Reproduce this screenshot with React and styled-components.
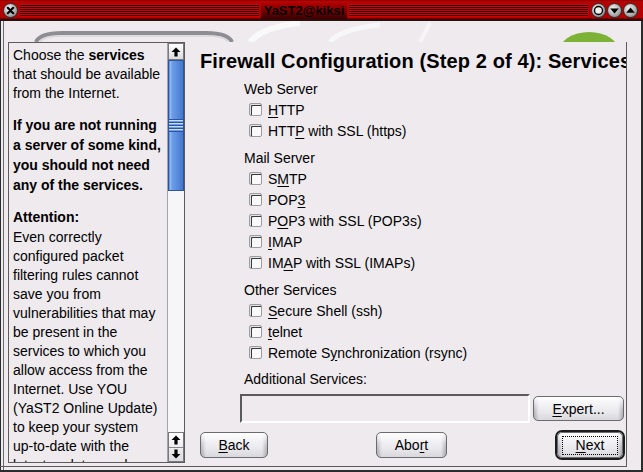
import React from 'react';
import styled, { createGlobalStyle } from 'styled-components';

const BG = '#eeeaee';

const Global = createGlobalStyle`
  html, body { margin: 0; padding: 0; background: ${BG}; }
  body { font-family: "Liberation Sans", Arial, sans-serif; color: #000; }
`;

const Window = styled.div`
  width: 643px;
  height: 472px;
  display: flex;
  flex-direction: column;
  overflow: hidden;
  background: ${BG};
`;

/* ---------- title bar ---------- */
const TitleBar = styled.div`
  flex: none;
  height: 21px;
  box-sizing: border-box;
  display: flex;
  align-items: center;
  gap: 2px;
  padding: 0 5px 0 3px;
  background: linear-gradient(to bottom, #6a0000 0, #b80000 1px, #b00000 18px, #400000 19px, #1a1a1a 21px);
`;

const Stripes = styled.div`
  flex: 1;
  height: 13px;
  background: repeating-linear-gradient(to bottom, #d40000 0 1px, #2a0000 1px 2px);
`;

const TitleLabel = styled.div`
  height: 16px;
  display: flex;
  align-items: center;
  padding: 0 3px;
  background: linear-gradient(to bottom, #b00000, #3a0000);
  font: bold 13px "Liberation Sans", Arial, sans-serif;
  color: #050000;
  white-space: nowrap;
`;

const WinButtons = styled.div`
  display: flex;
  gap: 1px;
  margin-left: 1px;
`;

const CircleBtn = ({ kind }) => (
  <svg width="15" height="15" viewBox="0 0 15 15">
    <defs>
      <radialGradient id={`g-${kind}`} cx="0.4" cy="0.35" r="0.7">
        <stop offset="0" stopColor="#f4f4f4" />
        <stop offset="1" stopColor="#8a8a8a" />
      </radialGradient>
    </defs>
    <circle cx="7.5" cy="7.5" r="7" fill={`url(#g-${kind})`} stroke="#2a2a2a" strokeWidth="1" />
    {kind === 'close' && (
      <path d="M4.8 4.8 L10.2 10.2 M10.2 4.8 L4.8 10.2" stroke="#000" strokeWidth="2.2" strokeLinecap="round" />
    )}
    {kind === 'ring' && <circle cx="7.5" cy="7.5" r="4" fill="#eee" stroke="#000" strokeWidth="1.4" />}
    {kind === 'down' && <path d="M3.2 5.5 L11.8 5.5 L7.5 10.5 Z" fill="#000" />}
    {kind === 'up' && <path d="M3.2 9.8 L11.8 9.8 L7.5 4.6 Z" fill="#000" />}
  </svg>
);

/* ---------- frame ---------- */
const Frame = styled.div`
  flex: 1;
  min-height: 0;
  overflow: hidden;
  display: flex;
  flex-direction: column;
  border-right: 2px solid #2c2c2c;
  box-shadow: inset 1px 0 0 #2c2c2c, inset 3px 0 0 ${BG}, inset 4px 0 0 #6a6a6a;
`;

const Banner = styled.div`
  flex: none;
  height: 21px;
  overflow: hidden;
  svg { display: block; }
`;

const Body = styled.div`
  flex: 1;
  min-height: 0;
  display: flex;
`;

const Main = styled.div`
  width: 627px;
  box-sizing: border-box;
  display: flex;
  min-height: 0;
  padding: 0 0 3px 8px;
  border-right: 1px solid #5a5a5a;
  border-bottom: 1px solid #5a5a5a;
`;

const BottomEdge = styled.div`
  flex: none;
  height: 5px;
  box-sizing: border-box;
  border-bottom: 2px solid #2c2c2c;
`;

/* ---------- help panel ---------- */
const HelpPanel = styled.div`
  width: 177px;
  flex: none;
  min-height: 0;
  box-sizing: border-box;
  border: 1px solid #5c5c5c;
  display: flex;
`;

const HelpText = styled.div`
  flex: 1;
  min-width: 0;
  min-height: 0;
  overflow: hidden;
  padding: 3px 0 0 4px;
  font-size: 14px;
  line-height: 19px;
  white-space: nowrap;
`;

const Para = styled.p`
  margin: 0 0 12px;
  font-weight: ${(p) => (p.$bold ? 'bold' : 'normal')};
  line-height: ${(p) => (p.$bold ? '20px' : '19px')};
`;

const Heading = styled.div`
  font-weight: bold;
  line-height: 21px;
`;

const Scrollbar = styled.div`
  width: 17px;
  flex: none;
  display: flex;
  flex-direction: column;
  border-left: 1px solid #a4a4a8;
  box-sizing: border-box;
`;

const ScrollBtn = styled.div`
  height: ${(p) => p.$h}px;
  flex: none;
  box-sizing: border-box;
  border: 1px solid #7a7a7e;
  background: linear-gradient(to bottom, #ffffff, #dcdce0);
  display: flex;
  flex-direction: column;
  align-items: center;
  justify-content: center;
`;

const Half = styled.div`
  flex: 1;
  width: 100%;
  display: flex;
  align-items: center;
  justify-content: center;
  border-top: ${(p) => (p.$sep ? '1px solid #8a8a8e' : 'none')};
`;

const Track = styled.div`
  flex: 1;
  min-height: 0;
  background: #f6f5f7;
  display: flex;
  flex-direction: column;
`;

const Thumb = styled.div`
  height: 131px;
  flex: none;
  box-sizing: border-box;
  border: 1px solid #2c55a0;
  background: linear-gradient(to right, #3c6cc0 0, #9cc2f4 1px, #6c9ee8 3px, #5a8cdc 60%, #4576c8 100%);
  display: flex;
  align-items: center;
`;

const Grip = styled.div`
  width: 100%;
  height: 13px;
  background: repeating-linear-gradient(to bottom, #2c55a0 0 1px, #c4dcfa 1px 2px, #6c9ee8 2px 3px);
`;

const Arrow = ({ down }) => (
  <svg width="10" height="10" viewBox="0 0 10 10" style={down ? { transform: 'rotate(180deg)' } : undefined}>
    <path d="M5 0.5 L9.5 5 L6.6 5 L6.6 9.5 L3.4 9.5 L3.4 5 L0.5 5 Z" fill="#000" />
  </svg>
);

/* ---------- right pane ---------- */
const RightPane = styled.div`
  flex: 1;
  min-width: 0;
  display: flex;
  flex-direction: column;
  padding: 7px 1px 3px 15px;
  overflow: hidden;
`;

const Title = styled.h1`
  margin: 0;
  font: bold 20px/24px "Liberation Sans", Arial, sans-serif;
  letter-spacing: 0.12px;
  white-space: nowrap;
`;

const Services = styled.div`
  margin: 6px 0 0 40px;
  display: flex;
  flex-direction: column;
  gap: 7px;
  font-size: 14px;
`;

const Group = styled.div`
  display: flex;
  flex-direction: column;
`;

const GroupLabel = styled.div`
  padding-left: 4px;
  line-height: 20px;
  white-space: nowrap;
`;

const Row = styled.label`
  height: 21px;
  display: flex;
  align-items: center;
  gap: 6px;
  padding-left: 9px;
  white-space: nowrap;
`;

const Check = styled.span`
  width: 13px;
  height: 13px;
  flex: none;
  box-sizing: border-box;
  border: 1px solid #9c9ca0;
  border-radius: 2px;
  background: #faf9fa;
  box-shadow: inset 1px 1px 0 #e4e4e6, inset 2px 2px 0 #3a3a3a;
`;

const Key = styled.span`
  text-decoration: underline;
  text-underline-offset: 2px;
`;

const AddLabel = styled(GroupLabel)`
  margin-top: -1px;
`;

const AddRow = styled.div`
  display: flex;
  align-items: center;
  gap: 3px;
  margin-top: 5px;
`;

const Input = styled.div`
  width: 290px;
  height: 29px;
  box-sizing: border-box;
  border: 2px solid;
  border-color: #5a5a5a #ffffff #ffffff #5a5a5a;
  background: ${BG};
`;

const Button = styled.div`
  width: ${(p) => p.$w}px;
  height: ${(p) => p.$h || 26}px;
  box-sizing: border-box;
  display: flex;
  align-items: center;
  justify-content: center;
  font-size: 14px;
  border: 1px solid #6c6c70;
  border-radius: 5px;
  background:
    linear-gradient(to bottom, rgba(255,255,255,0.95) 0, rgba(255,255,255,0.2) 45%, rgba(0,0,0,0) 60%, rgba(0,0,0,0.08) 100%),
    linear-gradient(to right, #b8b8be 0, #ebebef 5px, #ebebef calc(100% - 5px), #b4b4ba 100%);
  white-space: nowrap;
`;

const FocusRing = styled.div`
  border: 2px solid #1c1c1c;
  border-radius: 7px;
  display: flex;
`;

const FocusText = styled.span`
  width: 56px;
  height: 19px;
  box-sizing: border-box;
  display: flex;
  align-items: center;
  justify-content: center;
  border: 1px dotted #000;
`;

const ButtonRow = styled.div`
  margin-top: auto;
  height: 30px;
  flex: none;
  display: flex;
  align-items: center;
  justify-content: space-between;
`;

const Option = ({ children }) => (
  <Row>
    <Check />
    <span>{children}</span>
  </Row>
);

const BannerArt = () => (
  <svg width="641" height="21" viewBox="0 0 641 21">
    <path d="M250 21 Q262 6 300 2" stroke="#ffffff" strokeWidth="6" fill="none" opacity="0.7" />
    <path d="M330 21 Q340 8 380 4" stroke="#ffffff" strokeWidth="5" fill="none" opacity="0.6" />
    <path d="M420 21 L430 2" stroke="#ffffff" strokeWidth="4" fill="none" opacity="0.5" />
    <path d="M36 21 Q40 12 62 12 L206 12 Q228 12 232 21" stroke="#8e8e92" strokeWidth="4" fill="none" />
    <path d="M40 21 Q44 15 62 15 L206 15 Q225 15 228 21" stroke="#d8d6da" strokeWidth="1.5" fill="none" />
    <ellipse cx="589" cy="31" rx="30" ry="20" fill="#7cb236" />
  </svg>
);

export default function App() {
  return (
    <>
      <Global />
      <Window>
        <TitleBar>
          <CircleBtn kind="close" />
          <Stripes />
          <TitleLabel>YaST2@kiksi</TitleLabel>
          <Stripes />
          <WinButtons>
            <CircleBtn kind="ring" />
            <CircleBtn kind="down" />
            <CircleBtn kind="up" />
          </WinButtons>
        </TitleBar>
        <Frame>
          <Banner>
            <BannerArt />
          </Banner>
          <Body>
            <Main>
              <HelpPanel>
                <HelpText>
                  <Para>
                    Choose the <b>services</b>
                    <br />that should be available
                    <br />from the Internet.
                  </Para>
                  <Para $bold>
                    If you are not running
                    <br />a server of some kind,
                    <br />you should not need
                    <br />any of the services.
                  </Para>
                  <Heading>Attention:</Heading>
                  <Para>
                    Even correctly
                    <br />configured packet
                    <br />filtering rules cannot
                    <br />save you from
                    <br />vulnerabilities that may
                    <br />be present in the
                    <br />services to which you
                    <br />allow access from the
                    <br />Internet. Use YOU
                    <br />(YaST2 Online Update)
                    <br />to keep your system
                    <br />up-to-date with the
                    <br />latest updates and
                    <br />fixes.
                  </Para>
                </HelpText>
                <Scrollbar>
                  <ScrollBtn $h={17}>
                    <Arrow />
                  </ScrollBtn>
                  <Track>
                    <Thumb>
                      <Grip />
                    </Thumb>
                  </Track>
                  <ScrollBtn $h={30}>
                    <Half>
                      <Arrow />
                    </Half>
                    <Half $sep>
                      <Arrow down />
                    </Half>
                  </ScrollBtn>
                </Scrollbar>
              </HelpPanel>
              <RightPane>
                <Title>Firewall Configuration (Step 2 of 4): Services</Title>
                <Services>
                  <Group>
                    <GroupLabel>Web Server</GroupLabel>
                    <Option><Key>H</Key>TTP</Option>
                    <Option>HTT<Key>P</Key> with SSL (https)</Option>
                  </Group>
                  <Group>
                    <GroupLabel>Mail Server</GroupLabel>
                    <Option>S<Key>M</Key>TP</Option>
                    <Option>POP<Key>3</Key></Option>
                    <Option>P<Key>O</Key>P3 with SSL (POP3s)</Option>
                    <Option><Key>I</Key>MAP</Option>
                    <Option>IM<Key>A</Key>P with SSL (IMAPs)</Option>
                  </Group>
                  <Group>
                    <GroupLabel>Other Services</GroupLabel>
                    <Option><Key>S</Key>ecure Shell (ssh)</Option>
                    <Option><Key>t</Key>elnet</Option>
                    <Option>Remote S<Key>y</Key>nchronization (rsync)</Option>
                  </Group>
                  <Group>
                    <AddLabel>Additional Services:</AddLabel>
                    <AddRow>
                      <Input />
                      <Button $w={91} $h={25}><span><Key>E</Key>xpert...</span></Button>
                    </AddRow>
                  </Group>
                </Services>
                <ButtonRow>
                  <Button $w={68}><span><Key>B</Key>ack</span></Button>
                  <Button $w={71}><span>Abo<Key>r</Key>t</span></Button>
                  <FocusRing>
                    <Button $w={66} $h={26}>
                      <FocusText><Key>N</Key>ext</FocusText>
                    </Button>
                  </FocusRing>
                </ButtonRow>
              </RightPane>
            </Main>
            <div />
          </Body>
          <BottomEdge />
        </Frame>
      </Window>
    </>
  );
}
